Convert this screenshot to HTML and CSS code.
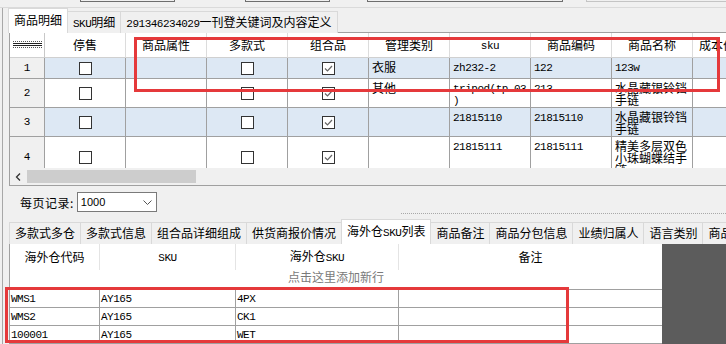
FILE: index.html
```html
<!DOCTYPE html>
<html lang="zh-CN">
<head>
  <meta charset="UTF-8">
  <title>商品明细</title>
  <link rel="stylesheet" href="styles.css">
</head>
<body>
  <div class="page">
    <!-- form inputs above, only their bottom edges show -->
    <div class="topbar">
      <span class="stub s1"></span>
      <span class="stub s2"></span>
      <span class="stub s3"></span>
      <span class="stub s4"></span>
    </div>

    <div class="main">
      <div class="tabs tabs-top">
        <span class="tab on">商品明细</span>
        <span class="tab"><span class="m">SKU</span>明细</span>
        <span class="tab"><span class="m">291346234029</span>一刊登关键词及内容定义</span>
      </div>

      <!-- Goods grid -->
      <div class="goods-panel">
        <div class="goods-view">
          <table class="goods">
            <colgroup>
              <col class="c-no">
              <col class="c"><col class="c"><col class="c"><col class="c"><col class="c">
              <col class="c"><col class="c"><col class="c"><col class="c">
            </colgroup>
            <tr class="head">
              <th class="corner">
                <svg width="29" height="8" viewBox="0 0 29 8">
                  <line x1="0" y1="0.5" x2="29" y2="0.5" stroke="#555" stroke-dasharray="1 1"/>
                  <line x1="0" y1="2.5" x2="29" y2="2.5" stroke="#222"/>
                  <line x1="0" y1="4.5" x2="29" y2="4.5" stroke="#222"/>
                  <line x1="0" y1="6.5" x2="29" y2="6.5" stroke="#555" stroke-dasharray="1 1"/>
                </svg>
              </th>
              <th>停售</th>
              <th>商品属性</th>
              <th>多款式</th>
              <th>组合品</th>
              <th>管理类别</th>
              <th><span class="m">sku</span></th>
              <th>商品编码</th>
              <th>商品名称</th>
              <th class="left">成本价</th>
            </tr>
            <tr class="r1 alt">
              <td class="no">1</td>
              <td class="ck"><span class="cb"></span></td>
              <td></td>
              <td class="ck"><span class="cb"></span></td>
              <td class="ck"><span class="cb on"><svg width="11" height="11" viewBox="0 0 11 11"><path d="M2 5.5 L4.5 8 L9 3" fill="none" stroke="#666" stroke-width="1.2"/></svg></span></td>
              <td>衣服</td>
              <td class="m">zh232-2</td>
              <td class="m">122</td>
              <td class="m">123w</td>
              <td></td>
            </tr>
            <tr class="r2">
              <td class="no">2</td>
              <td class="ck"><span class="cb"></span></td>
              <td></td>
              <td class="ck"><span class="cb"></span></td>
              <td class="ck"><span class="cb on"><svg width="11" height="11" viewBox="0 0 11 11"><path d="M2 5.5 L4.5 8 L9 3" fill="none" stroke="#666" stroke-width="1.2"/></svg></span></td>
              <td>其他</td>
              <td class="m">tripod(tp-03<br>)</td>
              <td class="m">213</td>
              <td>水晶藏银铃铛手链</td>
              <td></td>
            </tr>
            <tr class="r3 alt">
              <td class="no">3</td>
              <td class="ck"><span class="cb"></span></td>
              <td></td>
              <td class="ck"><span class="cb"></span></td>
              <td class="ck"><span class="cb on"><svg width="11" height="11" viewBox="0 0 11 11"><path d="M2 5.5 L4.5 8 L9 3" fill="none" stroke="#666" stroke-width="1.2"/></svg></span></td>
              <td></td>
              <td class="m">21815110</td>
              <td class="m">21815110</td>
              <td>水晶藏银铃铛手链</td>
              <td></td>
            </tr>
            <tr class="r4">
              <td class="no">4</td>
              <td class="ck"><span class="cb"></span></td>
              <td></td>
              <td class="ck"><span class="cb"></span></td>
              <td class="ck"><span class="cb on"><svg width="11" height="11" viewBox="0 0 11 11"><path d="M2 5.5 L4.5 8 L9 3" fill="none" stroke="#666" stroke-width="1.2"/></svg></span></td>
              <td></td>
              <td class="m">21815111</td>
              <td class="m">21815111</td>
              <td>精美多层双色小珠蝴蝶结手链</td>
              <td></td>
            </tr>
          </table>
        </div>
        <div class="hscroll">
          <svg class="arrow" width="6" height="8" viewBox="0 0 6 8"><path d="M5 0.5 L1.5 4 L5 7.5" fill="none" stroke="#333" stroke-width="1.3"/></svg>
          <span class="thumb"></span>
        </div>
      </div>

      <!-- Paging -->
      <div class="pager">
        <span class="label">每页记录:</span>
        <div class="select">
          <span>1000</span>
          <svg width="9" height="5" viewBox="0 0 9 5"><path d="M0.5 0.5 L4.5 4.5 L8.5 0.5" fill="none" stroke="#555"/></svg>
        </div>
        <span class="grip"></span>
      </div>

      <div class="tabs tabs-bottom">
        <span class="tab">多款式多仓</span>
        <span class="tab">多款式信息</span>
        <span class="tab">组合品详细组成</span>
        <span class="tab">供货商报价情况</span>
        <span class="tab on">海外仓<span class="m">SKU</span>列表</span>
        <span class="tab">商品备注</span>
        <span class="tab">商品分包信息</span>
        <span class="tab">业绩归属人</span>
        <span class="tab">语言类别</span>
        <span class="tab">商品图片</span>
      </div>

      <!-- Overseas warehouse SKU list -->
      <div class="sku-panel">
        <table class="sku">
          <colgroup>
            <col class="k1"><col class="k2"><col class="k3"><col class="k4">
          </colgroup>
          <tr class="head">
            <th>海外仓代码</th>
            <th><span class="m">SKU</span></th>
            <th>海外仓<span class="m">SKU</span></th>
            <th>备注</th>
          </tr>
          <tr class="add">
            <td colspan="4">点击这里添加新行</td>
          </tr>
          <tr class="row">
            <td class="m">WMS1</td><td class="m">AY165</td><td class="m">4PX</td><td></td>
          </tr>
          <tr class="row">
            <td class="m">WMS2</td><td class="m">AY165</td><td class="m">CK1</td><td></td>
          </tr>
          <tr class="row">
            <td class="m">100001</td><td class="m">AY165</td><td class="m">WET</td><td></td>
          </tr>
        </table>
        <div class="sku-empty"></div>
      </div>
    </div>

    <!-- red annotation frames -->
    <div class="mark mark-top"></div>
    <div class="mark mark-bottom"></div>
  </div>
</body>
</html>
```

FILE: styles.css
```css
/* General */
body {
  margin: 0;
  background: #f0f0f0;
  font-family: "Noto Sans CJK SC", sans-serif;
  font-size: 12px;
  color: #000;
}

.page {
  position: relative;
  width: 726px;
  height: 344px;
  overflow: hidden;
}

.m {
  font-family: "Liberation Mono", "Noto Sans CJK SC", monospace;
  font-size: 11px;
  letter-spacing: -0.5px;
}

/* Top strip */
.topbar {
  height: 7px;
  border-bottom: 1px solid #dadada;
  display: flex;
  align-items: flex-start;
}

.stub {
  height: 1px;
  border: 1px solid #6e6e6e;
  border-top: 0;
}

.s1 { margin-left: 80px; width: 93px; }
.s2 { margin-left: 70px; width: 83px; }
.s3 { margin-left: 37px; width: 194px; }
.s4 { margin-left: 23px; flex: 1; border-color: #c4c4c4; border-right: 0; }

.main {
  margin-left: 2px;
  border-left: 1px solid #a8a8a8;
}

/* Tabs */
.tabs {
  display: flex;
  align-items: flex-end;
  margin-bottom: -1px;
  white-space: nowrap;
}

.tab {
  height: 21px;
  line-height: 20px;
  padding: 0 5px;
  border: 1px solid #d9d9d9;
  border-bottom: 0;
  margin-right: -1px;
  background: #f0f0f0;
  flex-shrink: 0;
}

.tab.on {
  height: 24px;
  line-height: 22px;
  background: #fff;
  position: relative;
  z-index: 2;
}

.tabs-top {
  height: 25px;
  padding-left: 5px;
}

.tabs-bottom {
  height: 24px;
  padding-left: 6px;
}

.tabs-bottom .tab {
  height: 21px;
}

.tabs-bottom .tab.on {
  height: 24px;
}

/* Goods grid */
.goods-panel {
  margin-left: 6px;
  border: 1px solid #a0a0a0;
  border-right: 0;
}

.goods-view {
  height: 135px;
  overflow: hidden;
  background: #fff;
}

.goods {
  border-collapse: separate;
  border-spacing: 0;
  table-layout: fixed;
  width: 764px;
}

.goods .c-no { width: 35px; }
.goods .c { width: 81px; }

.goods tr.head { height: 25px; }
.goods tr.r1 { height: 21px; }
.goods tr.r2 { height: 29px; }
.goods tr.r3 { height: 29px; }
.goods tr.r4 { height: 41px; }

.goods th {
  padding: 0;
  font-weight: normal;
  line-height: 14px;
  text-align: center;
  border-right: 1px solid #dcdcdc;
  border-bottom: 1px solid #d0d0d0;
  background: #fff;
  white-space: nowrap;
  overflow: hidden;
}

.goods th.left {
  text-align: left;
  padding-left: 6px;
}

.goods th.corner {
  border-right-color: #c8c8c8;
}

.goods th svg {
  display: block;
  margin: 0 auto;
}

.goods td {
  padding: 3px 3px 0;
  line-height: 12px;
  vertical-align: top;
  border-right: 1px solid #a0a0a0;
  border-bottom: 1px solid #a0a0a0;
  overflow: hidden;
}

.goods td.m {
  padding-top: 4px;
}

.goods tr.alt td {
  background: #dde8f4;
}

.goods td.no,
.goods tr.alt td.no {
  background: #f0f0f0;
  text-align: center;
  vertical-align: middle;
  padding: 0;
  font-family: "Liberation Mono", monospace;
  font-size: 11px;
}

.goods td.ck {
  text-align: center;
  vertical-align: middle;
  padding: 0;
  line-height: 0;
}

.cb {
  display: inline-block;
  width: 11px;
  height: 11px;
  border: 1px solid #333;
  background: #fff;
}

.cb svg {
  display: block;
}

/* horizontal scroll bar */
.hscroll {
  height: 17px;
  display: flex;
  align-items: center;
  background: #f0f0f0;
}

.hscroll .arrow {
  margin-left: 5px;
}

.thumb {
  margin-left: 6px;
  width: 169px;
  height: 13px;
  background: #cdcdcd;
}

/* Paging row */
.pager {
  height: 34px;
  display: flex;
  align-items: flex-start;
  padding-left: 17px;
}

.pager .label {
  margin-top: 10px;
  line-height: 14px;
  letter-spacing: 0.5px;
}

.select {
  margin-top: 6px;
  margin-left: 3px;
  width: 80px;
  height: 20px;
  box-sizing: border-box;
  border: 1px solid #7a7a7a;
  background: #fff;
  display: flex;
  align-items: center;
  justify-content: space-between;
  padding: 0 4px 0 3px;
  font-family: "Liberation Sans", sans-serif;
  font-size: 11px;
}

.grip {
  margin-left: auto;
  margin-top: 27px;
  width: 325px;
  height: 0;
  border-top: 1px dotted #a8a8a8;
}

/* Overseas SKU grid */
.sku-panel {
  display: flex;
  height: 100px;
  margin-left: 6px;
  border-left: 1px solid #a0a0a0;
  border-top: 1px solid #a0a0a0;
}

.sku {
  border-collapse: separate;
  border-spacing: 0;
  table-layout: fixed;
  width: 652px;
  align-self: flex-start;
  background: #fff;
  flex-shrink: 0;
}

.sku .k1 { width: 90px; }
.sku .k2 { width: 136px; }
.sku .k3 { width: 163px; }
.sku .k4 { width: 263px; }

.sku tr.head { height: 26px; }
.sku tr.add { height: 20px; }
.sku tr.row { height: 18px; }

.sku th {
  padding: 0;
  font-weight: normal;
  line-height: 14px;
  text-align: center;
  border-right: 1px solid #e4e4e4;
}

.sku th:last-child {
  border-right: 0;
}

.sku .add td {
  padding: 0;
  text-align: center;
  color: #7a7a7a;
  line-height: 14px;
  vertical-align: top;
  border-bottom: 1px solid #a0a0a0;
}

.sku .row td {
  padding: 0 1px;
  border-right: 1px solid #a0a0a0;
  border-bottom: 1px solid #a0a0a0;
  vertical-align: middle;
  line-height: 12px;
}

.sku .row td:last-child {
  border-right: 0;
}

.sku-empty {
  flex: 1;
  background: #5c5c5c;
}

/* Red annotation frames */
.mark {
  position: absolute;
  box-sizing: border-box;
  border: 3px solid #e5393b;
  z-index: 5;
}

.mark-top {
  left: 134px;
  top: 37px;
  width: 586px;
  height: 55px;
}

.mark-bottom {
  left: 5px;
  top: 287px;
  width: 564px;
  height: 56px;
}
```
